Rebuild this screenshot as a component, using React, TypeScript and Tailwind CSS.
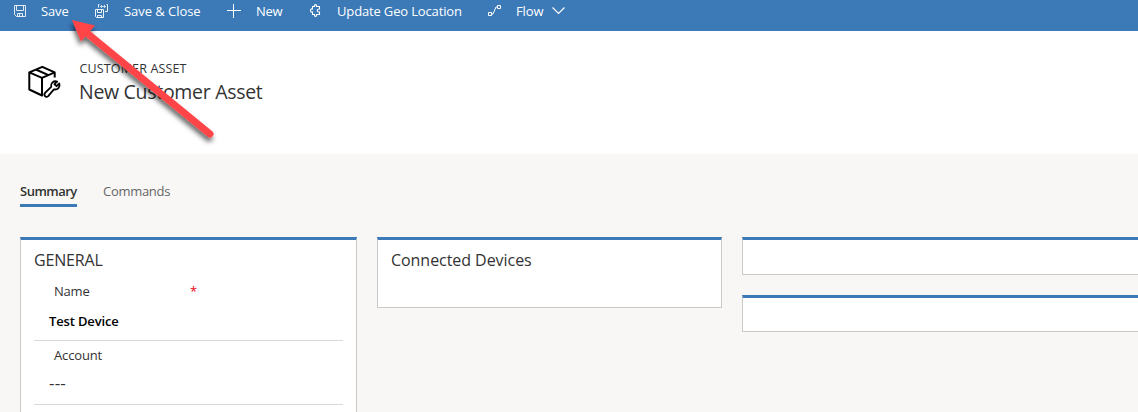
import React from "react";

const field = "mx-[13px] border-b border-[#d8d8d8] text-[13px]";
const card = "border border-[#cccac8] border-t-[3px] border-t-[#3b79b7] bg-white";

function SaveGlyph() {
  return (
    <svg width="13" height="12" viewBox="0 0 13 12" fill="none" stroke="white" strokeOpacity=".85" strokeWidth="1">
      <path d="M.5 .5h11v11h-9l-2-2zM2.5 .5v5h7v-5M3.5 11.500v-3h5v3M5.500 9v2.500" />
    </svg>
  );
}

function SaveCloseGlyph() {
  return (
    <svg width="14" height="14" viewBox="0 0 14 14" fill="none" stroke="white" strokeOpacity=".9" strokeWidth="1">
      <path d="M.5 5.500h8v8H1.500l-1-1zM2.500 5.500v3h4v-3M2.500 13.500v-2h4v2M3.500 3.500v-3h1M11.500 .5h1v7H10" />
      <path d="M5.500 2.500h5M7 1l-1.500 1.500L7 4M9 1l1.500 1.500L9 4" strokeOpacity=".75" />
    </svg>
  );
}

export default function App() {
  return (
    <div className="relative flex h-[412px] w-[1138px] flex-col overflow-hidden bg-[#f8f7f5] font-['Open_Sans',sans-serif] text-[#333]">
      <header className="flex h-[31px] shrink-0 items-start bg-[#3b79b7] text-[13px] leading-[22px] whitespace-nowrap text-white">
        <div className="flex w-[82px] pl-[14px]">
          <span className="w-[27px] pt-[5px]"><SaveGlyph /></span>
          <span className="tracking-[-0.15px]">Save</span>
        </div>
        <div className="flex w-[145px] pl-[13px]">
          <span className="w-[29px] pt-1"><SaveCloseGlyph /></span>
          <span className="tracking-[-0.05px]">Save &amp; Close</span>
        </div>
        <div className="flex w-[82px]">
          <span className="w-[29px] pt-1">
            <svg width="14" height="14" viewBox="0 0 14 14" stroke="white"><path d="M6.500 0v14M0 6.500h14" /></svg>
          </span>
          <span className="tracking-[-0.3px]">New</span>
        </div>
        <div className="flex w-[179px]">
          <span className="w-7 pt-1">
            <svg width="13" height="13" viewBox="0 0 13 13" fill="none" stroke="white" strokeWidth="1.100">
              <path d="M3.500 2.500h2C4.800 0 8.200 0 7.500 2.500h3V5C7.500 4.500 7.500 8.500 10.500 8v2.500h-3c.7 2.500-2.700 2.500-2 0h-2V8C.8 8.700.8 4.300 3.500 5z" />
            </svg>
          </span>
          <span className="tracking-[-0.15px]">Update Geo Location</span>
        </div>
        <div className="flex">
          <span className="w-7 pt-1">
            <svg width="14" height="13" viewBox="0 0 14 13" fill="none" stroke="white"><path d="M.5 8.500h3v3h-3zM9.500 1.500h3v3h-3zM3.500 10h1.500l3-7h1.500" /></svg>
          </span>
          <span className="w-[36px] tracking-[-0.1px]">Flow</span>
          <span className="pt-[7px]"><svg width="13" height="8" viewBox="0 0 13 8" fill="none" stroke="white" strokeWidth="1.200"><path d="M.5 .5l6 6 6-6" /></svg></span>
        </div>
      </header>

      <section className="flex h-[123px] shrink-0 bg-white pt-[28px] pl-[27px]">
        <svg className="mt-1.5" width="36" height="36" viewBox="0 0 36 36" fill="none" stroke="black" strokeWidth="2" strokeLinejoin="round">
          <path d="M27.700 12.500V7.300L15.300 1.800 2.300 7.300V24.500L15 30.500V12.800L27.700 7.300M2.300 7.300L15 12.800M8.800 4.500L21.500 10.200" />
          <path fill="white" strokeWidth="1.800" d="M18.300 27.700L24.200 21.800C23.400 18.200 26.500 15.300 30.200 16.600L27.400 19.200 29.500 21.200 32.300 18.500C33.500 22 30.600 25.100 26.900 24.400L21.200 31.100C18.800 33.300 16 30.200 18.300 27.700z" />
        </svg>
        <div className="ml-[17px] flex flex-col">
          <span className="-ml-[0.500px] text-[12.500px] leading-[20px] tracking-[0.150px]">CUSTOMER ASSET</span>
          <h1 className="-ml-px text-[19.500px] leading-[25px] tracking-[-0.3px]">New Customer Asset</h1>
        </div>
      </section>

      <nav className="flex h-[83px] shrink-0 items-start gap-[26px] pt-[27px] pl-5 text-[13px] leading-[20px]">
        <div className="h-[26px] w-[57px] border-b-[3px] border-[#3b79b7] font-semibold tracking-[-0.5px]">Summary</div>
        <div className="tracking-[-0.3px] text-[#666]">Commands</div>
      </nav>

      <main className="flex items-start gap-5 pl-5">
        <section className={`h-[180px] w-[337px] shrink-0 ${card}`}>
          <h2 className="h-[38px] pt-2 pl-[13px] text-[16px] leading-[24px] tracking-[-0.15px]">GENERAL</h2>
          <div className={`h-[63px] ${field}`}>
            <div className="flex pl-5 leading-[26px] tracking-[-0.2px]"><span className="w-[136px]">Name</span><span className="text-red-600">*</span></div>
            <div className="pl-[15px] leading-[34px] font-semibold tracking-[-0.15px] text-black">Test Device</div>
          </div>
          <div className={`h-[64px] ${field}`}>
            <div className="pl-5 leading-[28px] tracking-[-0.15px]">Account</div>
            <div className="pl-[15px] text-[17px] leading-[28px] tracking-[0.200px]">---</div>
          </div>
        </section>
        <section className={`h-[71px] w-[345px] shrink-0 ${card}`}>
          <h2 className="pt-2 pl-[13px] text-[16px] leading-[24px] tracking-[-0.05px]">Connected Devices</h2>
        </section>
        <div className="flex w-[420px] shrink-0 flex-col gap-5">
          <section className={`h-[38px] ${card}`} />
          <section className={`h-[37px] ${card}`} />
        </div>
      </main>

      <svg className="absolute top-0 left-0" width="240" height="160" viewBox="0 0 240 160">
        <defs><filter id="shade" x="-20%" y="-20%" width="150%" height="150%"><feDropShadow dx="-1" dy="4" stdDeviation="2.500" floodColor="#000" floodOpacity=".6" /></filter></defs>
        <g filter="url(#shade)">
          <path d="M85 31.500L210 134" stroke="#ff4546" strokeWidth="7" strokeLinecap="round" />
          <path d="M72 20l23 5.500-14 16z" fill="#ff4546" />
        </g>
      </svg>
    </div>
  );
}
